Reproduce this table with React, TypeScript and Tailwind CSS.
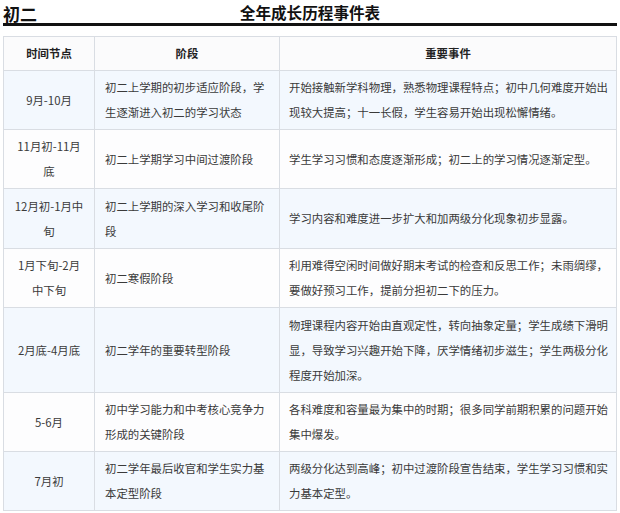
const rows: { time: string[]; stage: string[]; events: string[] }[] = [
  {
    time: ['9月-10月'],
    stage: ['初二上学期的初步适应阶段，学', '生逐渐进入初二的学习状态'],
    events: ['开始接触新学科物理，熟悉物理课程特点；初中几何难度开始出', '现较大提高；十一长假，学生容易开始出现松懈情绪。'],
  },
  {
    time: ['11月初-11月', '底'],
    stage: ['初二上学期学习中间过渡阶段'],
    events: ['学生学习习惯和态度逐渐形成；初二上的学习情况逐渐定型。'],
  },
  {
    time: ['12月初-1月中', '旬'],
    stage: ['初二上学期的深入学习和收尾阶', '段'],
    events: ['学习内容和难度进一步扩大和加两级分化现象初步显露。'],
  },
  {
    time: ['1月下旬-2月', '中下旬'],
    stage: ['初二寒假阶段'],
    events: ['利用难得空闲时间做好期末考试的检查和反思工作；未雨绸缪，', '要做好预习工作，提前分担初二下的压力。'],
  },
  {
    time: ['2月底-4月底'],
    stage: ['初二学年的重要转型阶段'],
    events: [
      '物理课程内容开始由直观定性，转向抽象定量；学生成绩下滑明',
      '显，导致学习兴趣开始下降，厌学情绪初步滋生；学生两极分化',
      '程度开始加深。',
    ],
  },
  {
    time: ['5-6月'],
    stage: ['初中学习能力和中考核心竞争力', '形成的关键阶段'],
    events: ['各科难度和容量最为集中的时期；很多同学前期积累的问题开始', '集中爆发。'],
  },
  {
    time: ['7月初'],
    stage: ['初二学年最后收官和学生实力基', '本定型阶段'],
    events: ['两级分化达到高峰；初中过渡阶段宣告结束，学生学习习惯和实', '力基本定型。'],
  },
]

function Lines({ lines }: { lines: string[] }) {
  return (
    <>
      {lines.map((l, i) => (
        <div key={i} className="whitespace-nowrap">{l}</div>
      ))}
    </>
  )
}

export default function App() {
  return (
    <div
      className="w-[620px] h-[513px] bg-white text-[#3a3a3a] overflow-hidden"
      style={{ fontFamily: '"Noto Sans CJK SC", "Noto Sans", sans-serif' }}
    >
      <div className="px-[3px] pt-[3px]">
        <div className="grid grid-cols-[1fr_auto_1fr] items-center h-[23px] border-b-[3px] border-[#111]">
          <div className="text-[17px] font-bold leading-none text-[#111]">初二</div>
          <div className="text-[15.6px] font-bold leading-none text-[#111]">全年成长历程事件表</div>
          <div />
        </div>
      </div>

      <div className="pl-[3px] pt-[10px]">
        <table className="border-collapse table-fixed w-[613px] text-[11.4px] leading-[25px]">
          <colgroup>
            <col className="w-[91px]" />
            <col className="w-[185px]" />
            <col className="w-[337px]" />
          </colgroup>
          <thead>
            <tr className="h-[34px] bg-[#fbfbfc]">
              <th className="border border-[#d9dde3] font-bold text-[#222] text-center">时间节点</th>
              <th className="border border-[#d9dde3] font-bold text-[#222] text-center">阶段</th>
              <th className="border border-[#d9dde3] font-bold text-[#222] text-center">重要事件</th>
            </tr>
          </thead>
          <tbody>
            {rows.map((r, i) => (
              <tr
                key={i}
                className={
                  (i % 2 === 0 ? 'bg-[#f3f8fe] ' : 'bg-[#fdfdfe] ') +
                  (r.events.length > 2 ? 'h-[85px]' : i === 2 ? 'h-[60px]' : 'h-[59px]')
                }
              >
                <td className="border border-[#d9dde3] text-center align-middle py-[4px]">
                  <Lines lines={r.time} />
                </td>
                <td className="border border-[#d9dde3] align-middle pl-[10px] pr-[4px] py-[4px]">
                  <Lines lines={r.stage} />
                </td>
                <td className="border border-[#d9dde3] align-middle pl-[9px] pr-[2px] py-[4px]">
                  <Lines lines={r.events} />
                </td>
              </tr>
            ))}
          </tbody>
        </table>
      </div>
    </div>
  )
}
